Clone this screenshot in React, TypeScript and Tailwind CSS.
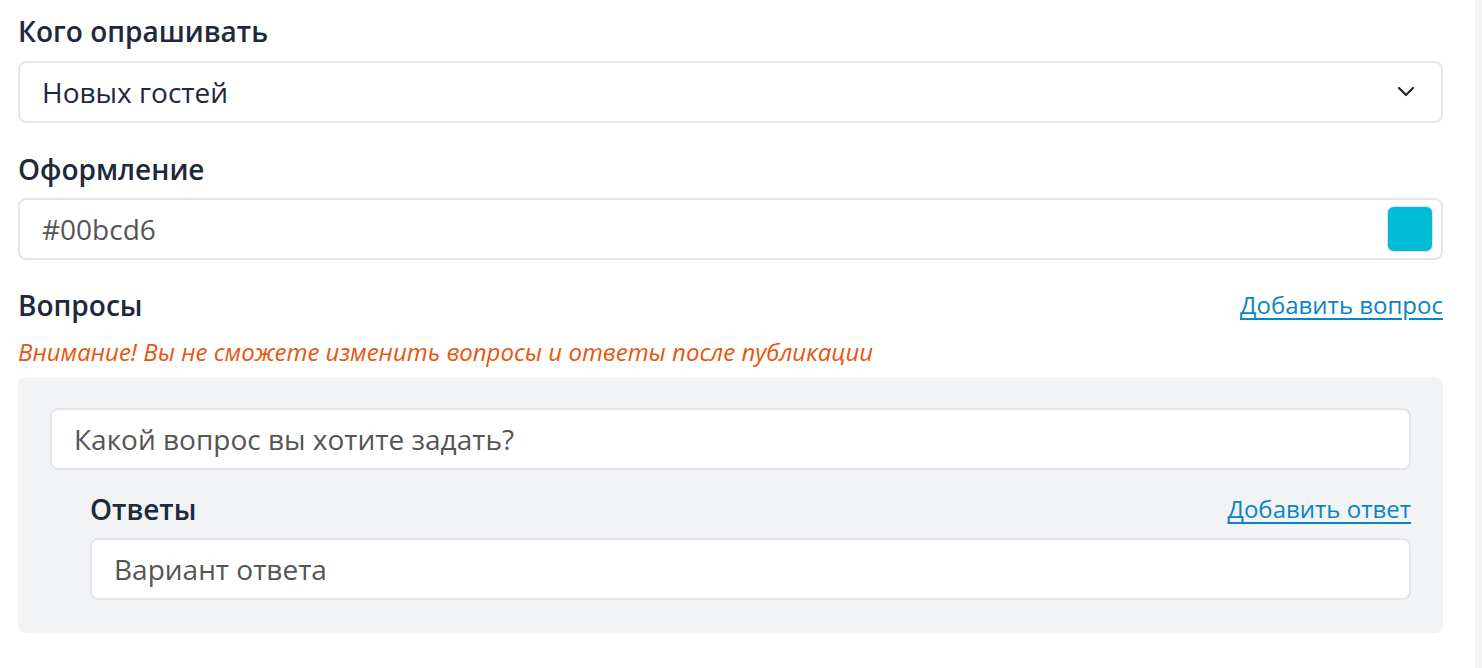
const Label = ({ children }: { children: React.ReactNode }) => (
  <div className="text-[28px] leading-[36px] font-semibold text-[#1e293b]">{children}</div>
);

const Field = ({ children, className = "" }: { children: React.ReactNode; className?: string }) => (
  <div
    className={`flex h-[62px] items-center rounded-[8px] border-2 border-[#e3e6ea] bg-white pl-[22px] pr-[8px] text-[28px] ${className}`}
  >
    {children}
  </div>
);

export default function App() {
  return (
    <div className="flex min-h-[668px] bg-white" style={{ fontFamily: '"Open Sans", sans-serif' }}>
      <div className="w-[1475px] shrink-0 pl-[18px] pr-[32px] pt-[13px]">
        {/* Кого опрашивать */}
        <Label>Кого опрашивать</Label>
        <Field className="mt-[12px] justify-between pr-[26px] text-[#1e293b]">
          <span>Новых гостей</span>
          <svg width="18" height="12" viewBox="0 0 18 12" fill="none">
            <polyline points="2,2 9,9 16,2" stroke="#1e293b" strokeWidth="2.2" strokeLinecap="round" strokeLinejoin="round" />
          </svg>
        </Field>

        {/* Оформление */}
        <div className="mt-[28px]">
          <Label>Оформление</Label>
        </div>
        <Field className="mt-[11px] justify-between text-[#555]">
          <span>#00bcd6</span>
          <div className="h-[46px] w-[46px] rounded-[7px] border border-[#dde1e6] bg-[#00bcd6]" />
        </Field>

        {/* Вопросы */}
        <div className="mt-[27px] flex items-center justify-between">
          <Label>Вопросы</Label>
          <a href="#" className="text-[24px] leading-[36px] text-[#0a84c6] underline underline-offset-[4px]">
            Добавить вопрос
          </a>
        </div>
        <div className="mt-[14px] text-[24px] leading-[30px] italic text-[#e8560e]">
          Внимание! Вы не сможете изменить вопросы и ответы после публикации
        </div>

        <div className="mt-[10px] rounded-[8px] bg-[#f2f3f5] px-[32px] pt-[31px] pb-[33px]">
          <Field className="text-[#555]">Какой вопрос вы хотите задать?</Field>
          <div className="pl-[40px]">
            <div className="mt-[21px] flex items-center justify-between">
              <Label>Ответы</Label>
              <a href="#" className="text-[24px] leading-[36px] text-[#0a84c6] underline underline-offset-[4px]">
                Добавить ответ
              </a>
            </div>
            <Field className="mt-[11px] text-[#555]">Вариант ответа</Field>
          </div>
        </div>
      </div>
      <div className="flex-1 bg-[#f3f4f6]" />
    </div>
  );
}
